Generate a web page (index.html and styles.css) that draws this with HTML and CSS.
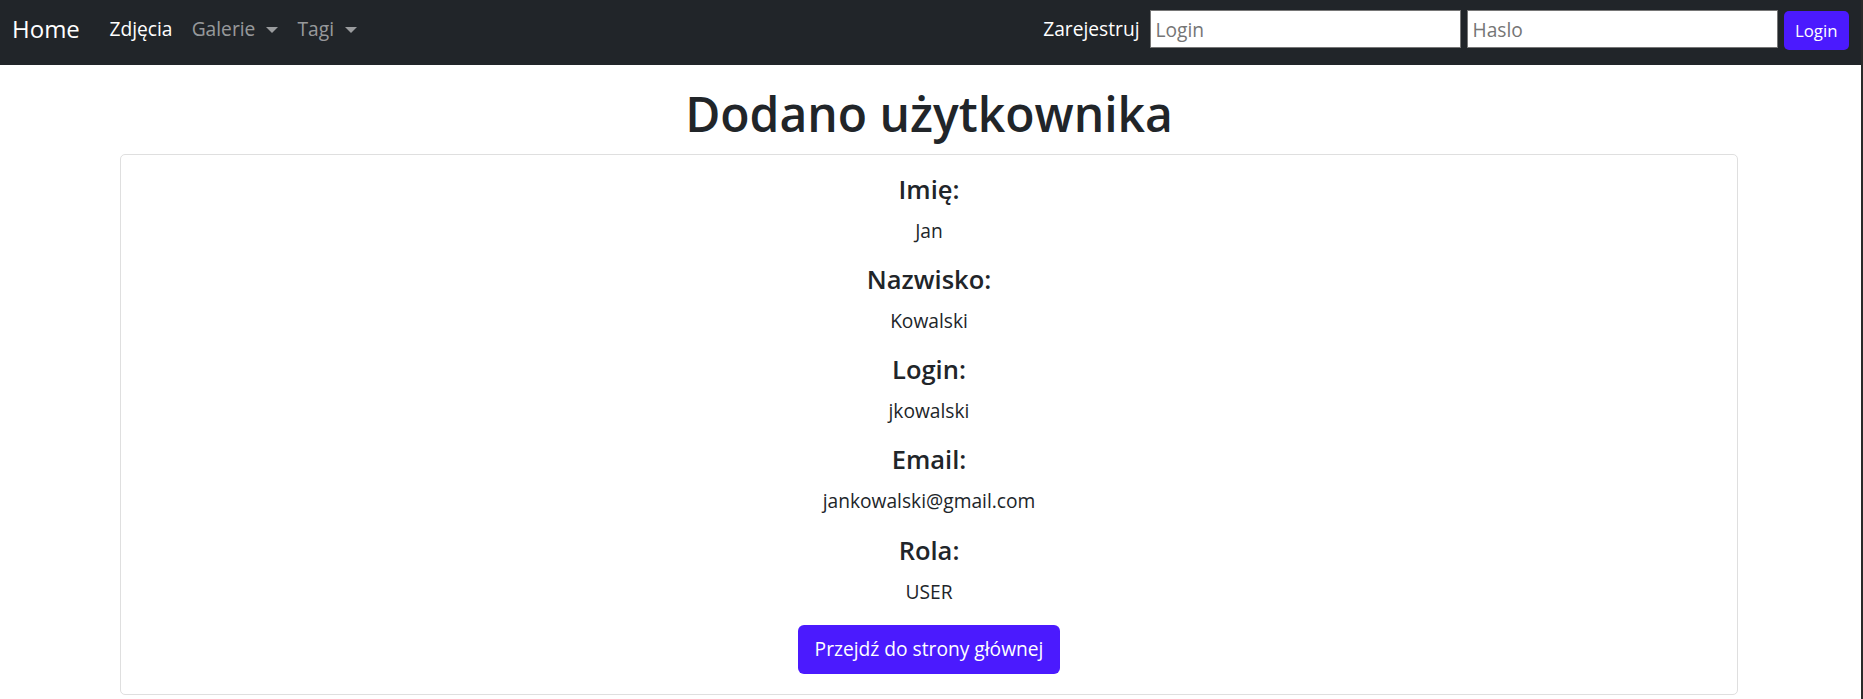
FILE: index.html
```html
<!DOCTYPE html>
<html lang="pl">
<head>
<meta charset="utf-8">
<title>Dodano użytkownika</title>
<link rel="stylesheet" href="styles.css">
</head>
<body>
<div class="page">
  <nav class="navbar">
    <a class="brand" href="#">Home</a>
    <ul class="nav">
      <li><a class="nav-link active" href="#">Zdjęcia</a></li>
      <li><a class="nav-link" href="#">Galerie<span class="caret"></span></a></li>
      <li><a class="nav-link" href="#">Tagi<span class="caret"></span></a></li>
    </ul>
    <form class="login-form">
      <a class="register" href="#">Zarejestruj</a>
      <input class="field" type="text" placeholder="Login">
      <input class="field" type="password" placeholder="Haslo">
      <button class="btn btn-sm" type="button">Login</button>
    </form>
  </nav>
  <main class="main">
    <h1 class="title">Dodano użytkownika</h1>
    <section class="card">
      <h4 class="label">Imię:</h4>
      <p class="value">Jan</p>
      <h4 class="label">Nazwisko:</h4>
      <p class="value">Kowalski</p>
      <h4 class="label">Login:</h4>
      <p class="value">jkowalski</p>
      <h4 class="label">Email:</h4>
      <p class="value">jankowalski@gmail.com</p>
      <h4 class="label">Rola:</h4>
      <p class="value">USER</p>
      <a class="btn btn-main" href="#">Przejdź do strony głównej</a>
    </section>
  </main>
</div>
</body>
</html>
```
FILE: styles.css
```css
* { box-sizing: border-box; }
html, body { margin: 0; padding: 0; }
body {
  font-family: "Open Sans", "Noto Sans", sans-serif;
  font-size: 19.2px;
  line-height: 1.5;
  color: #212529;
  background: #fff;
}
.page {
  min-height: 699px;
  border-right: 2px solid #2a2a2a;
}
a { text-decoration: none; }

.navbar {
  display: flex;
  align-items: center;
  height: 65px;
  padding: 0 12px 7px 12px;
  background: #212529;
}
.brand {
  color: #fff;
  font-size: 24px;
  line-height: 36px;
  margin-right: 20px;
}
.nav {
  display: flex;
  list-style: none;
  margin: 0;
  padding: 0;
}
.nav-link {
  display: flex;
  align-items: center;
  padding: 0 9.6px;
  color: rgba(255, 255, 255, 0.55);
  line-height: 28.8px;
}
.nav-link.active { color: #fff; }
.caret {
  display: inline-block;
  margin-left: 11px;
  margin-top: 2px;
  width: 0;
  height: 0;
  border-top: 6px solid currentColor;
  border-left: 6px solid transparent;
  border-right: 6px solid transparent;
}
.login-form {
  margin-left: auto;
  display: flex;
  align-items: center;
  gap: 6px;
}
.register {
  color: #fff;
  margin-right: 4px;
  line-height: 28.8px;
}
.field {
  width: 311px;
  height: 38px;
  margin: 0;
  padding: 0 5px;
  border: 1px solid #767676;
  border-radius: 0;
  background: #fff;
  font-family: inherit;
  font-size: 19.2px;
  color: #212529;
}
.field::placeholder { color: #757575; }
.btn {
  display: inline-block;
  background: #4b1afe;
  color: #fff;
  border: none;
  font-family: inherit;
  text-align: center;
}
.btn-sm {
  height: 39px;
  margin-top: 3px;
  padding: 0 11.5px;
  font-size: 16.8px;
  border-radius: 5px;
}

.main {
  padding: 20px 123px 0 120px;
}
.title {
  margin: 0 0 11px;
  text-align: center;
  font-size: 48px;
  font-weight: 600;
  line-height: 1.2;
}
.card {
  display: flex;
  flex-direction: column;
  align-items: center;
  text-align: center;
  border: 1px solid #dfdfdf;
  border-radius: 5px;
  padding: 19px 19px 20px;
}
.label {
  margin: 0 0 12.4px;
  font-size: 25.5px;
  font-weight: 600;
  line-height: 1.2;
}
.value {
  margin: 0 0 18.5px;
  line-height: 28.8px;
}
.btn-main {
  margin-top: 0;
  padding: 10px 17px;
  border-radius: 6px;
  line-height: 28.8px;
  font-size: 19.2px;
}
```
